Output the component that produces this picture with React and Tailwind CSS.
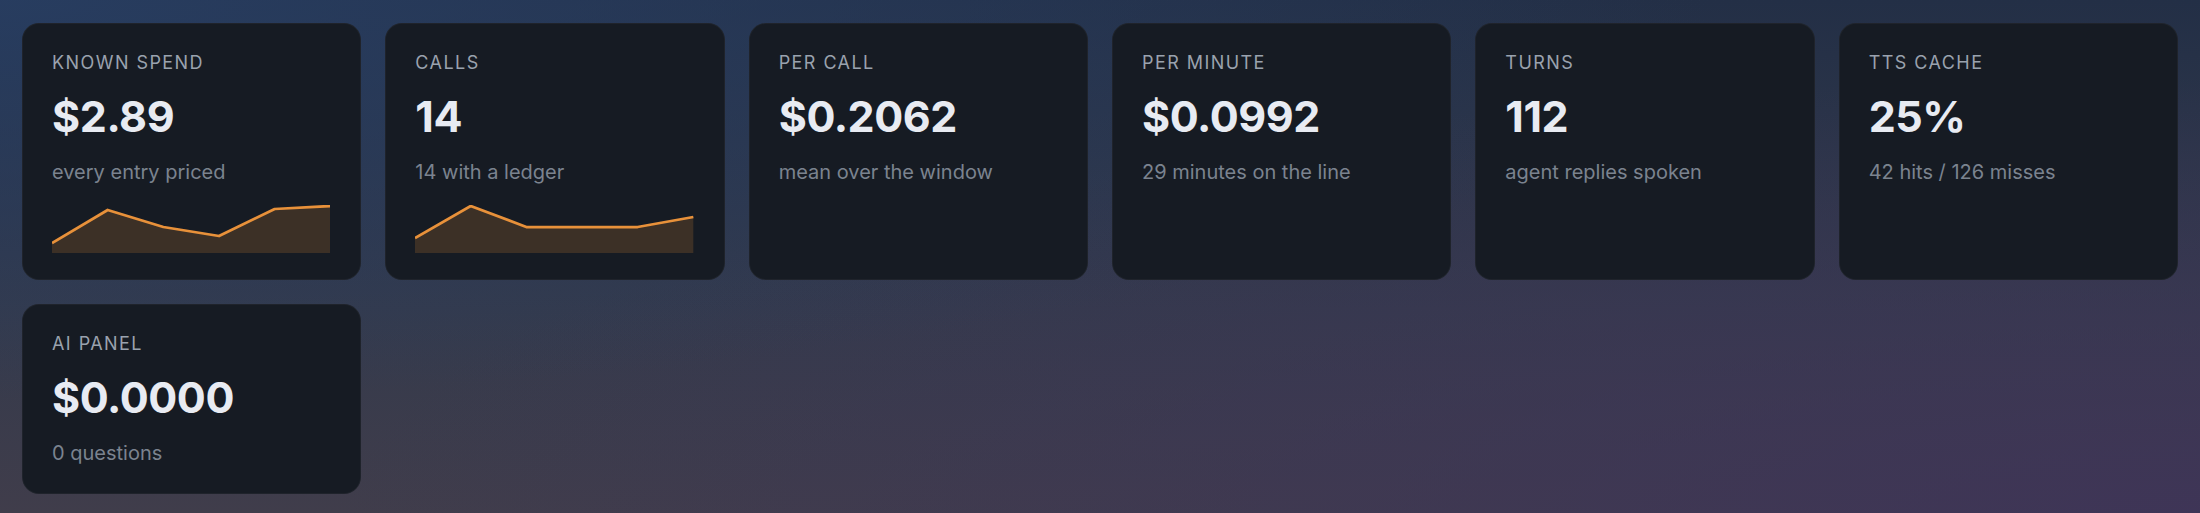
const stats = [
    { label: 'Known spend', value: '$2.89', note: 'every entry priced', spark: [38, 5, 22, 31, 4, 1] },
    { label: 'Calls', value: '14', note: '14 with a ledger', spark: [33, 1, 22, 22, 22, 12] },
    { label: 'Per call', value: '$0.2062', note: 'mean over the window' },
    { label: 'Per minute', value: '$0.0992', note: '29 minutes on the line' },
    { label: 'Turns', value: '112', note: 'agent replies spoken' },
    { label: 'TTS cache', value: '25%', note: '42 hits / 126 misses' },
    { label: 'AI panel', value: '$0.0000', note: '0 questions' },
];

function Sparkline({ points }) {
    const w = 280;
    const h = 48;
    const step = w / (points.length - 1);
    const line = points.map((y, i) => `${(i * step).toFixed(1)},${y}`).join(' ');
    const area = `0,${h} ${line} ${w},${h}`;
    return (
        <svg className="mt-[19px] block h-[48px] w-full" viewBox={`0 0 ${w} ${h}`} preserveAspectRatio="none">
            <polygon points={area} fill="#e8913a" fillOpacity="0.18" />
            <polyline points={line} fill="none" stroke="#e8913a" strokeWidth="2.75" strokeLinejoin="round" vectorEffect="non-scaling-stroke" />
        </svg>
    );
}

function StatCard({ label, value, note, spark }) {
    return (
        <div className="rounded-[17px] border border-white/[0.04] bg-[#161b23] pl-[29px] pr-[30px] pt-[27px] pb-[26px]">
            <div className="text-[18px] leading-[24px] uppercase tracking-[0.08em] text-[#9aa2ae]">{label}</div>
            <div className="mt-[19px] text-[43px] leading-[44px] font-bold tracking-[-0.01em] text-[#e8ebf2]">{value}</div>
            <div className="mt-[20px] text-[20px] leading-[28px] text-[#7b838f]">{note}</div>
            {spark && <Sparkline points={spark} />}
        </div>
    );
}

export default function App() {
    return (
        <div
            className="min-h-screen bg-[radial-gradient(ellipse_at_0%_0%,rgba(40,62,98,0.9),transparent_55%),radial-gradient(ellipse_at_100%_100%,rgba(62,52,88,0.9),transparent_60%),linear-gradient(180deg,#232f46_0%,#343a4c_60%,#403d4b_100%)] px-[22px] pt-[23px] pb-[21px]"
            style={{ fontFamily: 'Inter, "Noto Sans", sans-serif' }}
        >
            <div className="grid grid-cols-6 gap-[24px]">
                {stats.map((s) => (
                    <StatCard key={s.label} {...s} />
                ))}
            </div>
        </div>
    );
}
